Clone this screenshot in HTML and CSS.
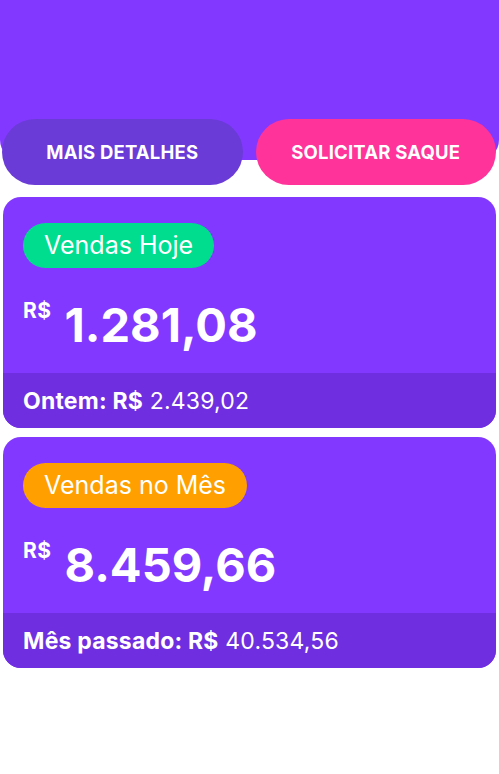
FILE: index.html
```html
<!DOCTYPE html>
<html lang="pt-BR">
<head>
    <meta charset="UTF-8">
    <meta name="viewport" content="width=device-width, initial-scale=1.0">
    <title>Vendas</title>
    <link rel="stylesheet" href="styles.css">
</head>
<body>
    <div class="header"></div>
    <div class="actions">
        <button class="btn btn-details">Mais detalhes</button>
        <button class="btn btn-withdraw">Solicitar saque</button>
    </div>
    <div class="card">
        <div class="card-body">
            <span class="badge badge-today">Vendas Hoje</span>
            <div class="amount">
                <span class="currency">R$</span>
                <span class="value">1.281,08</span>
            </div>
        </div>
        <div class="card-footer">
            <b>Ontem: R$</b>&nbsp;2.439,02
        </div>
    </div>
    <div class="card">
        <div class="card-body">
            <span class="badge badge-month">Vendas no Mês</span>
            <div class="amount">
                <span class="currency">R$</span>
                <span class="value">8.459,66</span>
            </div>
        </div>
        <div class="card-footer">
            <b>Mês passado: R$</b>&nbsp;40.534,56
        </div>
    </div>
</body>
</html>
```
FILE: styles.css
```css
body {
    margin: 0;
    background-color: #fff;
    color: #fff;
    font-family: Inter, "Noto Sans", sans-serif;
}
.header {
    height: 160px;
    background-color: #8338ff;
    border-radius: 0 0 20px 20px;
}
.actions {
    display: flex;
    gap: 13px;
    margin-top: -41px;
    padding: 0 3px 0 2px;
}
.btn {
    flex: 1;
    height: 66px;
    border: none;
    border-radius: 33px;
    color: #fff;
    font-family: inherit;
    font-size: 18.5px;
    font-weight: 700;
    letter-spacing: 0.2px;
    text-transform: uppercase;
    cursor: pointer;
}
.btn-details { background-color: #6a3bd6; }
.btn-withdraw { background-color: #ff3399; }
.card {
    margin: 12px 3px 0 3px;
    border-radius: 18px;
    overflow: hidden;
    background-color: #8338ff;
}
.card + .card { margin-top: 9px; }
.card-body {
    padding: 26px 20px 25px 20px;
}
.badge {
    display: inline-block;
    height: 45px;
    line-height: 45px;
    padding: 0 21px;
    border-radius: 23px;
    font-size: 25px;
}
.badge-today { background-color: #00dd8f; }
.badge-month { background-color: #ff9f00; }
.amount {
    display: flex;
    align-items: flex-start;
    gap: 13px;
    margin-top: 33px;
}
.currency {
    margin-top: -1px;
    font-size: 21px;
    line-height: 1;
    font-weight: 700;
    letter-spacing: 0.5px;
}
.value {
    font-size: 47px;
    line-height: 1;
    font-weight: 700;
}
.card-footer {
    display: flex;
    align-items: center;
    height: 55px;
    padding: 0 20px;
    background-color: #6f2ee0;
    font-size: 23px;
    letter-spacing: 0.2px;
}
```
